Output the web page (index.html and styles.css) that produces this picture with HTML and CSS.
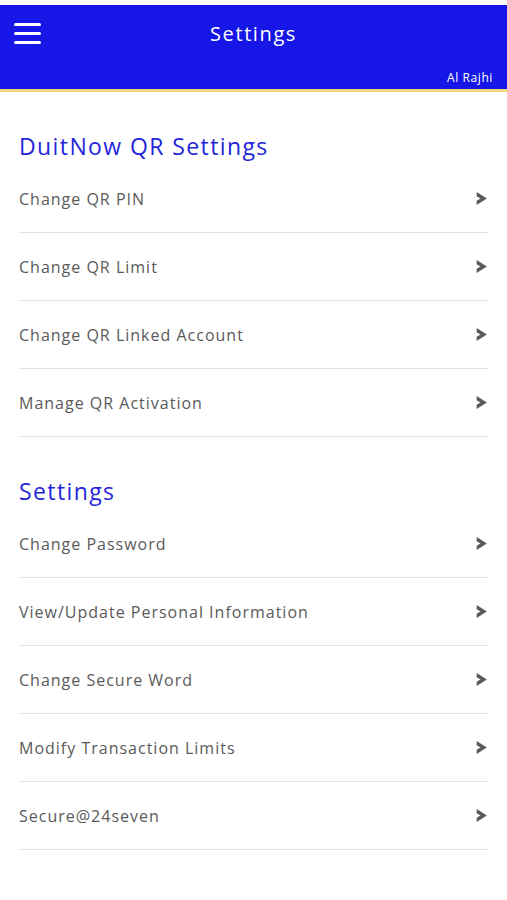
FILE: index.html
```html
<!DOCTYPE html>
<html lang="en">
<head>
    <meta charset="UTF-8">
    <meta name="viewport" content="width=device-width, initial-scale=1.0">
    <title>Settings</title>
    <link rel="stylesheet" href="styles.css">
</head>
<body>
    <header class="top-bar">
        <div class="top-row">
            <button class="menu-button" aria-label="Menu">
                <span></span><span></span><span></span>
            </button>
            <h1 class="title">Settings</h1>
        </div>
        <div class="bank-name">Al Rajhi</div>
    </header>

    <section class="settings-group">
        <h2 class="group-title">DuitNow QR Settings</h2>
        <ul class="settings-list">
            <li><span>Change QR PIN</span><svg class="chevron" viewBox="0 0 12 14"><path d="M1.5 1 L11 7 L1.5 13 L1.5 9 L5 7 L1.5 5 Z"/></svg></li>
            <li><span>Change QR Limit</span><svg class="chevron" viewBox="0 0 12 14"><path d="M1.5 1 L11 7 L1.5 13 L1.5 9 L5 7 L1.5 5 Z"/></svg></li>
            <li><span>Change QR Linked Account</span><svg class="chevron" viewBox="0 0 12 14"><path d="M1.5 1 L11 7 L1.5 13 L1.5 9 L5 7 L1.5 5 Z"/></svg></li>
            <li><span>Manage QR Activation</span><svg class="chevron" viewBox="0 0 12 14"><path d="M1.5 1 L11 7 L1.5 13 L1.5 9 L5 7 L1.5 5 Z"/></svg></li>
        </ul>
    </section>

    <section class="settings-group">
        <h2 class="group-title">Settings</h2>
        <ul class="settings-list">
            <li><span>Change Password</span><svg class="chevron" viewBox="0 0 12 14"><path d="M1.5 1 L11 7 L1.5 13 L1.5 9 L5 7 L1.5 5 Z"/></svg></li>
            <li><span>View/Update Personal Information</span><svg class="chevron" viewBox="0 0 12 14"><path d="M1.5 1 L11 7 L1.5 13 L1.5 9 L5 7 L1.5 5 Z"/></svg></li>
            <li><span>Change Secure Word</span><svg class="chevron" viewBox="0 0 12 14"><path d="M1.5 1 L11 7 L1.5 13 L1.5 9 L5 7 L1.5 5 Z"/></svg></li>
            <li><span>Modify Transaction Limits</span><svg class="chevron" viewBox="0 0 12 14"><path d="M1.5 1 L11 7 L1.5 13 L1.5 9 L5 7 L1.5 5 Z"/></svg></li>
            <li><span>Secure@24seven</span><svg class="chevron" viewBox="0 0 12 14"><path d="M1.5 1 L11 7 L1.5 13 L1.5 9 L5 7 L1.5 5 Z"/></svg></li>
        </ul>
    </section>
</body>
</html>
```

FILE: styles.css
```css
body {
    font-family: "Open Sans", Arial, sans-serif;
    background-color: #ffffff;
    color: #5a5a5a;
    margin: 0;
    padding-top: 5px;
}

.top-bar {
    background: #1616e6;
    color: white;
    height: 84px;
    border-bottom: 3px solid #f6d67c;
    display: flex;
    flex-direction: column;
}

.top-row {
    display: flex;
    align-items: center;
    height: 57px;
    position: relative;
}

.menu-button {
    display: flex;
    flex-direction: column;
    gap: 6px;
    background: none;
    border: none;
    padding: 0;
    margin-left: 14px;
    cursor: pointer;
}

.menu-button span {
    display: block;
    width: 27px;
    height: 3px;
    border-radius: 2px;
    background: white;
}

.title {
    position: absolute;
    left: 0;
    right: 0;
    text-align: center;
    margin: 0;
    font-size: 20px;
    font-weight: 400;
    letter-spacing: 1.6px;
    pointer-events: none;
}

.bank-name {
    text-align: right;
    font-size: 12px;
    font-weight: 500;
    padding-right: 14px;
    margin-top: 7px;
    letter-spacing: 0.6px;
}

.settings-group {
    padding: 37px 18px 0 19px;
}

.group-title {
    margin: 0;
    height: 36px;
    line-height: 34px;
    font-size: 23px;
    font-weight: 400;
    color: #2626d9;
    letter-spacing: 1.4px;
}

.settings-list {
    list-style: none;
    margin: 0;
    padding: 0;
}

.settings-list li {
    height: 67px;
    border-bottom: 1px solid #e3e3e3;
    display: flex;
    align-items: center;
    justify-content: space-between;
    font-size: 16px;
    letter-spacing: 1px;
    cursor: pointer;
}

.chevron {
    width: 13px;
    height: 15px;
    fill: #5a5a5a;
    margin-right: 1px;
}
```
